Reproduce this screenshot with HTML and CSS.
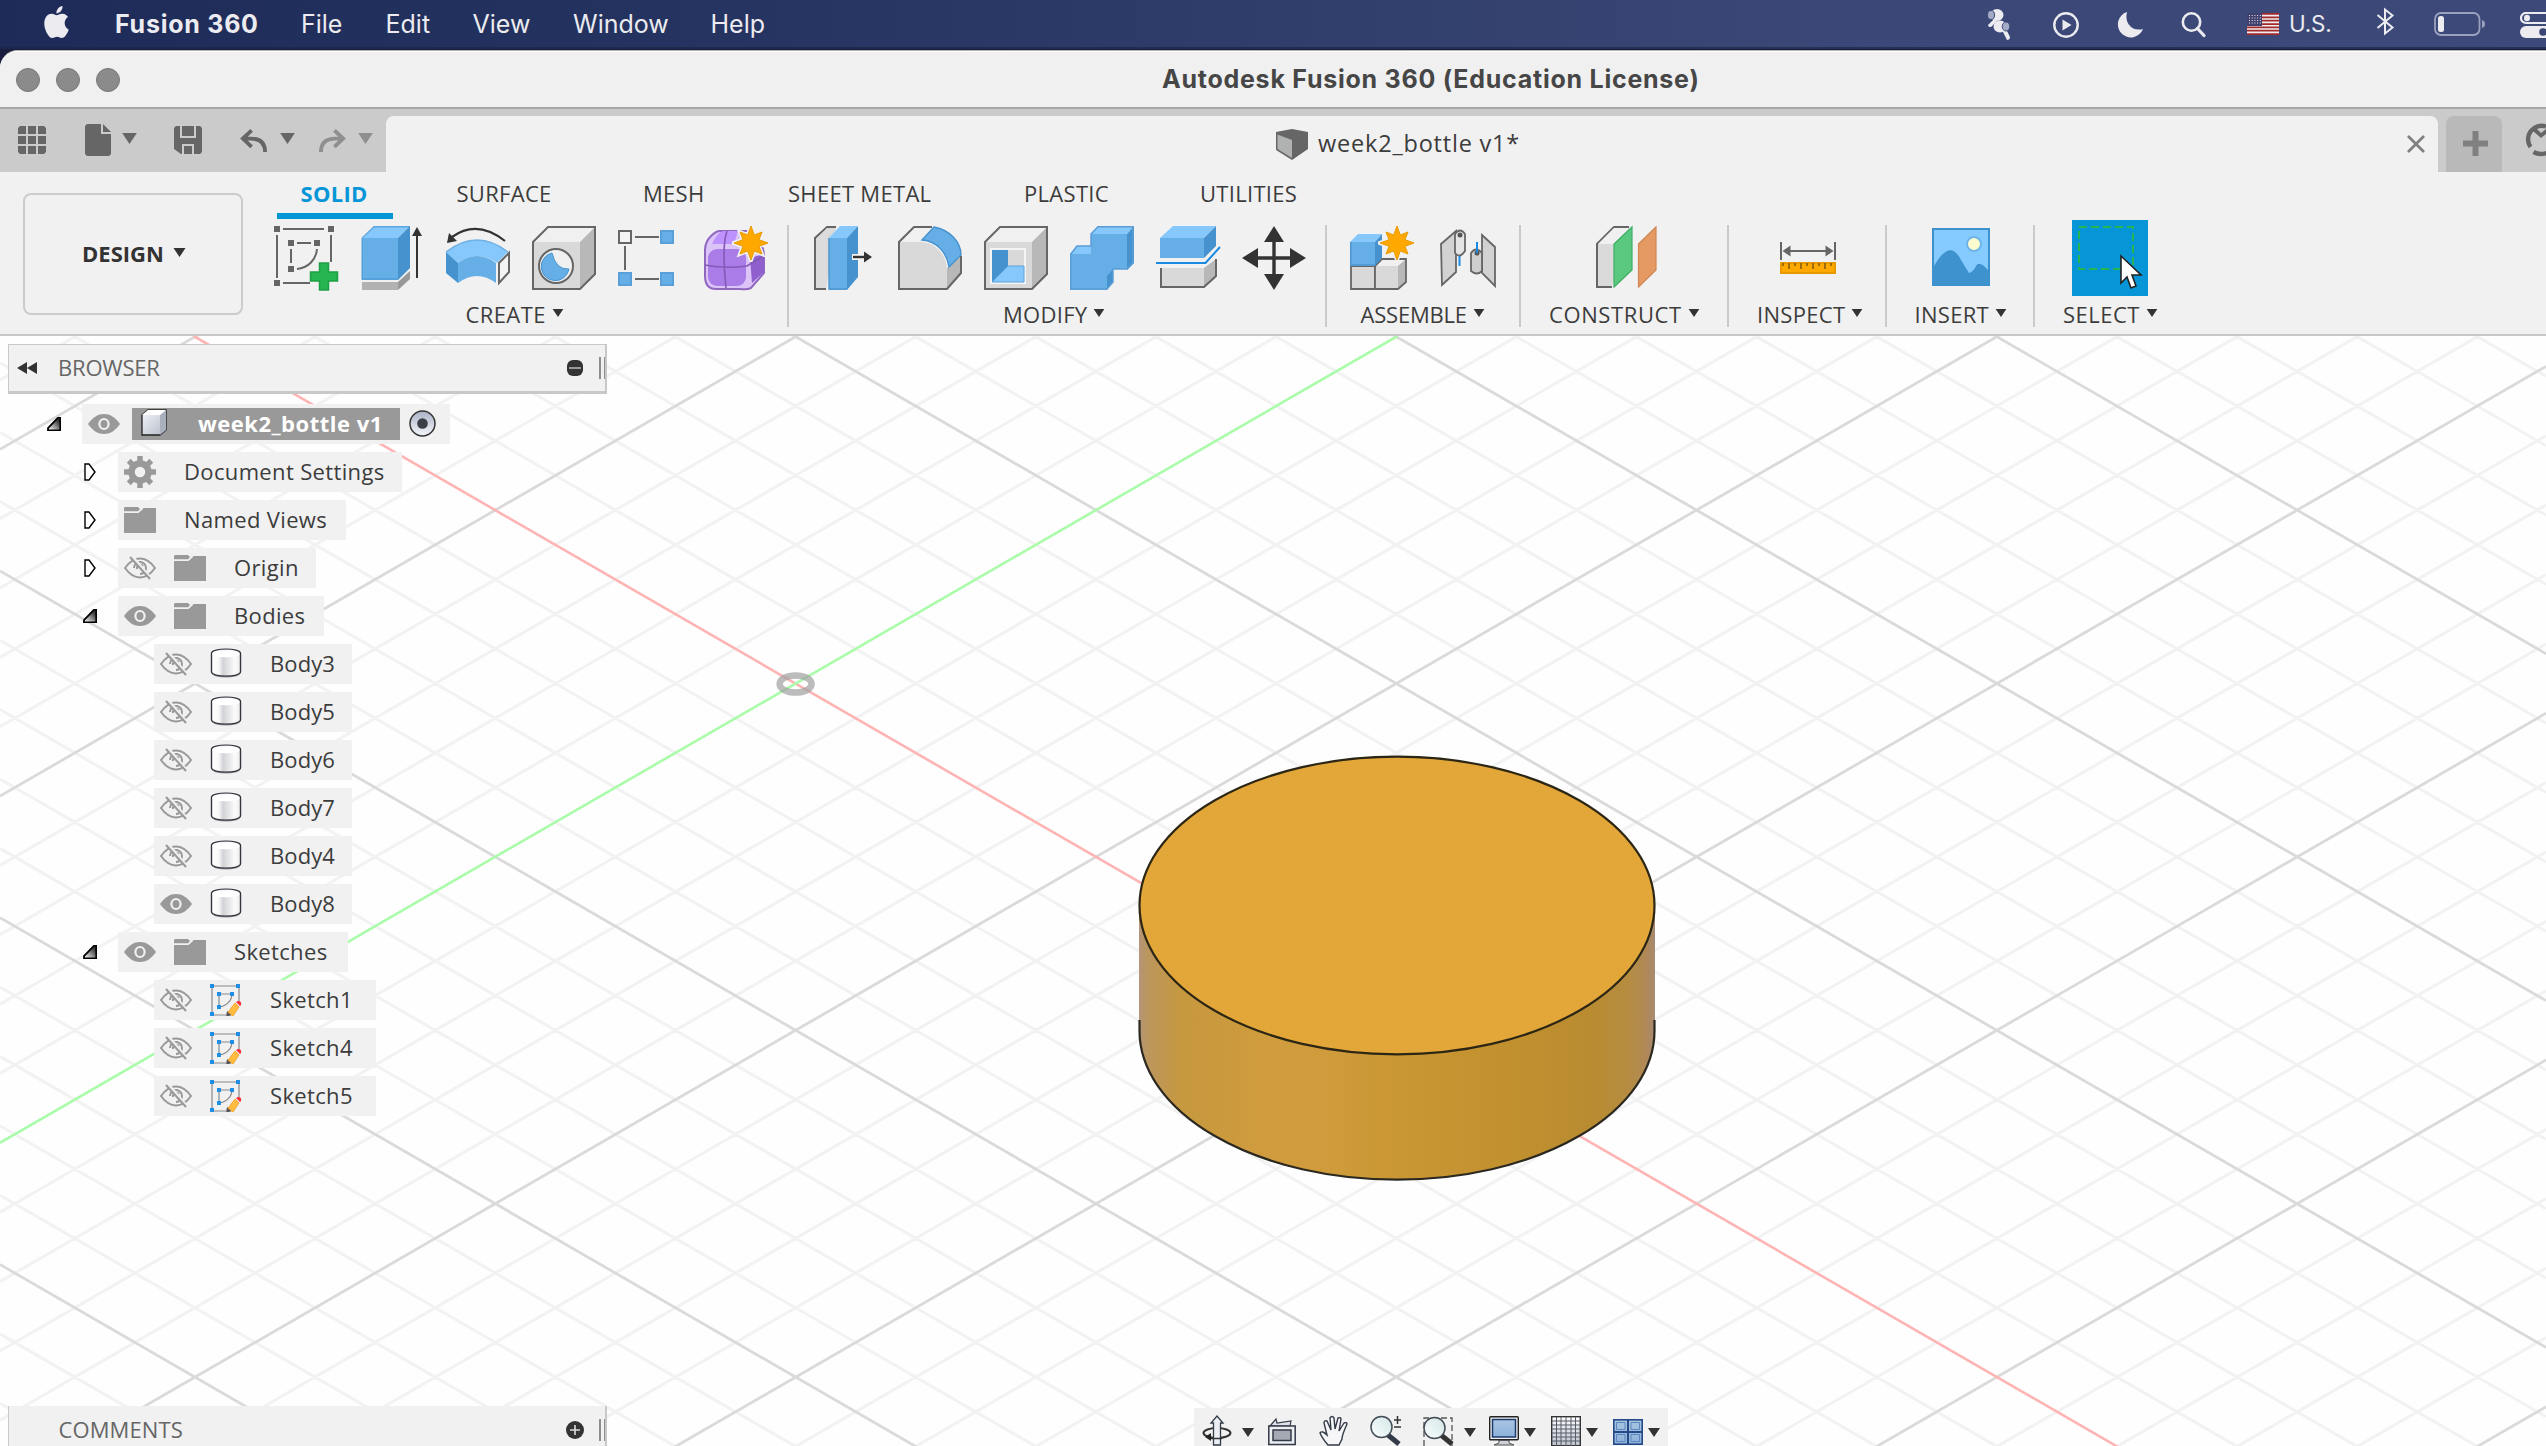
FILE: index.html
```html
<!DOCTYPE html>
<html lang="en">
<head>
<meta charset="utf-8">
<title>Autodesk Fusion 360</title>
<link rel="stylesheet" href="styles.css">
</head>
<body>
<svg class="defs" aria-hidden="true">
  <defs>
    <linearGradient id="side" x1="0" x2="1" y1="0" y2="0">
      <stop offset="0" stop-color="#b3957a"/><stop offset=".015" stop-color="#bb965f"/><stop offset=".08" stop-color="#c6983f"/><stop offset=".25" stop-color="#d09c3d"/><stop offset=".38" stop-color="#cf9b3b"/><stop offset=".5" stop-color="#c99733"/><stop offset=".72" stop-color="#c2912f"/><stop offset=".88" stop-color="#b98b31"/><stop offset=".95" stop-color="#b58c41"/><stop offset=".985" stop-color="#af885a"/><stop offset="1" stop-color="#a68a72"/>
    </linearGradient>
    <linearGradient id="metal" x1="0" x2="1" y1="0" y2="1"><stop offset="0" stop-color="#f4f6fa"/><stop offset="1" stop-color="#b4bac6"/></linearGradient>
    <linearGradient id="can" x1="0" x2="1" y1="0" y2="0"><stop offset="0" stop-color="#fff"/><stop offset=".25" stop-color="#f8f8f8"/><stop offset=".4" stop-color="#d2d3d8"/><stop offset=".8" stop-color="#fafafa"/><stop offset="1" stop-color="#eee"/></linearGradient>
    <linearGradient id="fold" x1="0" x2="1" y1="1" y2="0"><stop offset=".1" stop-color="#eee"/><stop offset=".8" stop-color="#333"/></linearGradient>
    <linearGradient id="ring" x1="0" x2="0" y1="0" y2="1"><stop offset="0" stop-color="#a9b2c6"/><stop offset="1" stop-color="#f4f6fa"/></linearGradient>
    <linearGradient id="lens" x1="0" x2="1" y1="1" y2="0"><stop offset="0" stop-color="#fafefe"/><stop offset="1" stop-color="#d3e6e6"/></linearGradient>
    <linearGradient id="glass" x1="0" x2="0" y1="0" y2="1"><stop offset="0" stop-color="#a9c4e2"/><stop offset="1" stop-color="#8db1db"/></linearGradient>
    <linearGradient id="mesh" x1="0" x2="0" y1="0" y2="1"><stop offset="0" stop-color="#fff"/><stop offset="1" stop-color="#bcc1cc"/></linearGradient>
  </defs>
  <symbol id="caret" viewBox="0 0 12 9"><path d="M0 0h12L6 9z" fill="currentColor"/></symbol>
  <symbol id="star" viewBox="-19 -19 38 38"><path d="M0-17 3.3-8 11-11 8-3.3 17 0 8 3.3 11 11 3.3 8 0 17-3.3 8-11 11-8 3.3-17 0-8-3.3-11-11-3.3-8z" fill="#ffa800" stroke="#f1f1f1" stroke-width="4"/><path d="M0-17 3.3-8 11-11 8-3.3 17 0 8 3.3 11 11 3.3 8 0 17-3.3 8-11 11-8 3.3-17 0-8-3.3-11-11-3.3-8z" fill="#ffa800" stroke="#e89a00"/></symbol>
  <symbol id="eye" viewBox="0 0 32 24"><path d="M0 12C5 5 10 2 16 2s11 3 16 10c-5 7-10 10-16 10S5 19 0 12z" fill="#999"/><ellipse cx="16" cy="12" rx="4.600" ry="5" fill="none" stroke="#f1f1f1" stroke-width="2.200"/></symbol>
  <symbol id="eye-off" viewBox="0 0 32 24"><g fill="none" stroke="#999" stroke-width="2"><path d="M1 12C6 5 10 2.500 16 2.500s10 2.500 15 9.500c-5 7-9 9.500-15 9.500S6 19 1 12z"/><path d="M10 12a6 6 0 0 1 6-6 6 6 0 0 1 6 6 6 6 0 0 1-6 6M13 13a3.500 3.500 0 0 1 6-3"/><path d="M8 0l20 24" stroke="#f1f1f1" stroke-width="3"/><path d="M6 1l20 22"/></g></symbol>
  <symbol id="folder" viewBox="0 0 32 26" preserveAspectRatio="none"><path d="M0 6h14l5-5h13v25H0z" fill="#999"/><path d="M1 0h13l2 2-2 2.500H0V1z" fill="#999"/><path d="M0 5.200h14.500l4.500-4" stroke="#f1f1f1" stroke-width="1.200" fill="none"/></symbol>
  <symbol id="body" viewBox="0 0 32 34" preserveAspectRatio="none"><ellipse cx="16" cy="29" rx="14" ry="4.500" fill="#9a9aa0"/><path d="M1.500 6c0-6.500 29-6.500 29 0v21c0 6.500-29 6.500-29 0z" fill="url(#can)" stroke="#33343c" stroke-width="1.400"/><ellipse cx="16" cy="6.500" rx="13.500" ry="4" fill="#fff"/></symbol>
  <symbol id="sketch" viewBox="0 0 32 32"><path d="M2 2h27v18M2 2v29h14M9 10h13c0 6-5 12-13 13V10" fill="none" stroke="#888" stroke-width="1.200"/><path d="M0 0h4v4H0zM26 0h4v4h-4zM0 28h4v4H0zM7 8h4v4H7zM20 8h4v4h-4zM7 21h4v4H7z" fill="#1f8fe6"/><path d="M16 33l1-6 5 4z" fill="#555"/><path d="M18 28l7-9 4 4-6 9z" fill="#ffbc41" stroke="#f1a01c" stroke-width=".8"/><path d="M26 18l2-1q4 0 3 4l-1 1z" fill="#fb2f35"/></symbol>
  <symbol id="open" viewBox="0 0 14 14"><path d="M1 13.300V11L11 .7h2.300v12.600z" fill="url(#fold)" stroke="#000" stroke-width="1.800"/></symbol>
  <symbol id="closed" viewBox="0 0 12 18"><path d="M1 1h4l6 8-6 8H1z" fill="#fff" stroke="#000" stroke-width="1.400"/></symbol>
</svg>

<nav class="menubar">
  <svg class="apple" viewBox="2 0 20 24" preserveAspectRatio="none"><path d="M12.152 6.896c-.948 0-2.415-1.078-3.960-1.040-2.040.027-3.910 1.183-4.961 3.014-2.117 3.675-.546 9.103 1.519 12.090 1.013 1.454 2.208 3.090 3.792 3.039 1.520-.065 2.090-.987 3.935-.987 1.831 0 2.350.987 3.960.948 1.637-.026 2.676-1.480 3.676-2.948 1.156-1.688 1.636-3.325 1.662-3.415-.039-.013-3.182-1.221-3.220-4.857-.026-3.040 2.480-4.494 2.597-4.559-1.429-2.090-3.623-2.324-4.390-2.376-2-.156-3.675 1.090-4.610 1.090zM15.530 3.830c.843-1.012 1.400-2.427 1.245-3.830-1.207.052-2.662.805-3.532 1.818-.78.896-1.454 2.338-1.273 3.714 1.338.104 2.715-.688 3.559-1.701" fill="#ebebf0"/></svg>
  <div class="menus"><b>Fusion 360</b><span>File</span><span>Edit</span><span>View</span><span>Window</span><span>Help</span></div>
  <div class="status">
    <svg class="s-pods" viewBox="0 0 24 31"><g fill="#ebebf0"><ellipse cx="10" cy="6" rx="6.500" ry="6"/><ellipse cx="13" cy="17.500" rx="6.500" ry="6"/><path d="M7 10l3 2-6 6q-3 0-3-2zM15 21l4-1 4 8q0 3-3 3z"/></g><ellipse cx="4" cy="6" rx="3.500" ry="4.500" fill="#a4abc6" stroke="#3b4877"/><ellipse cx="19" cy="17.500" rx="3.800" ry="4.500" fill="#a4abc6" stroke="#3b4877"/></svg>
    <svg class="s-play" viewBox="0 0 26 26"><circle cx="13" cy="13" r="11.700" fill="none" stroke="#ebebf0" stroke-width="2.400"/><path d="M9.500 7.500v11l9-5.500z" fill="#ebebf0"/></svg>
    <svg class="s-moon" viewBox="0 0 26 26"><path d="M10 0a13 13 0 1 0 16 17C15 20 7 11 10 0z" fill="#ebebf0"/></svg>
    <svg class="s-find" viewBox="0 0 25 25"><circle cx="10.500" cy="10" r="8.700" fill="none" stroke="#ebebf0" stroke-width="2.600"/><path d="M16.500 16.500l6.500 7" stroke="#ebebf0" stroke-width="3.200" stroke-linecap="round"/></svg>
    <svg class="s-flag" viewBox="0 0 32 22"><path fill="#f0eef0" d="M0 0h32v22H0z"/><path d="M0 .9h32M0 4.300h32M0 7.700h32M0 11.100h32M0 14.400h32M0 17.700h32M0 21.200h32" stroke="#a3292b" stroke-width="1.700"/><path fill="#40406e" d="M0 0h15v13H0z"/><path d="M2 2.500h12M2 5h12M2 7.500h12M2 10h12" stroke="#e8e8f0" stroke-width="1" stroke-dasharray="1 1.700"/></svg>
    <span class="s-lang">U.S.</span>
    <svg class="s-bt" viewBox="0 0 18 27"><path d="M1.500 7l15 12.500L9 25.500V1.500L16.500 7.500 1.500 20" fill="none" stroke="#ebebf0" stroke-width="2"/></svg>
    <svg class="s-batt" viewBox="0 0 51 24"><rect x="1" y="1" width="44.500" height="22" rx="6" fill="none" stroke="#9aa1bd" stroke-width="1.800"/><rect x="4" y="4" width="6" height="16" rx="2.500" fill="#ebebf0"/><path d="M48 8q3 1 3 4t-3 4z" fill="#9aa1bd"/></svg>
    <svg class="s-cc" viewBox="0 0 26 26"><rect x="1" y="1" width="34" height="10" rx="5" fill="none" stroke="#ebebf0" stroke-width="2.200"/><ellipse cx="7" cy="6" rx="3" ry="3.200" fill="#ebebf0"/><rect y="14" width="36" height="12" rx="6" fill="#ebebf0"/><circle cx="23" cy="20" r="3.800" fill="#3b4877"/></svg>
  </div>
</nav>

<div class="window">
  <header class="titlebar"><div class="lights"><i></i><i></i><i></i></div><h1>Autodesk Fusion 360 (Education License)</h1></header>

  <div class="tabbar">
    <div class="quick">
      <svg class="q-grid" viewBox="0 0 28 28"><path fill="#666" d="M2 0h6v8H0V2zM10 0h8v8h-8zM20 0h6l2 2v6h-8zM0 10h8v8H0zM10 10h8v8h-8zM20 10h8v8h-8zM0 20h8v8H2l-2-2zM10 20h8v8h-8zM20 20h8v6l-2 2h-6z"/></svg>
      <svg class="q-file" viewBox="0 0 26 32"><path fill="#666" d="M2 0h14v10h10v20l-2 2H2l-2-2V2zM18 0l8 8h-8z"/></svg>
      <svg class="q-c1"><use href="#caret"/></svg>
      <svg class="q-save" viewBox="0 0 28 28"><path fill="#666" d="M2 0h24l2 2v24l-2 2H7l-7-5V2z"/><path fill="#cbcbcb" d="M6 0h2v10h12V0h2v12H6zM8 28v-10h12v10h-2v-8h-8v8z"/></svg>
      <svg class="q-undo" viewBox="0 0 27 24"><path d="M11 1L2 9.500 11 18M2.500 9.500H10q15 0 15 14" fill="none" stroke="#666" stroke-width="4"/></svg>
      <svg class="q-c2"><use href="#caret"/></svg>
      <svg class="q-redo" viewBox="0 0 27 24"><path d="M16 1l9 8.500L16 18M24.500 9.500H17q-15 0-15 14" fill="none" stroke="#8f8f8f" stroke-width="4"/></svg>
      <svg class="q-c3"><use href="#caret"/></svg>
    </div>
    <div class="doc-tab">
      <svg class="cube" viewBox="0 0 32 31"><path fill="#666" d="M0 3L16 0l16 3v17L16 31 0 21z"/><path fill="#b0b2b2" d="M1.500 5.500L16 11v18L1.500 20z"/></svg>
      <span>week2_bottle v1*</span>
      <svg class="close" viewBox="0 0 18 18"><path d="M1 1l16 16M17 1L1 17" stroke="#808080" stroke-width="2.800"/></svg>
    </div>
    <div class="new-tab"><svg viewBox="0 0 25 25"><path d="M12.500 0v25M0 12.500h25" stroke="#808080" stroke-width="6"/></svg></div>
    <svg class="job" viewBox="0 0 20 32"><path d="M4.500 23A13.500 13.500 0 0 1 20 2.500M7.500 28q6 3.500 13 1" fill="none" stroke="#666" stroke-width="4.500"/><path d="M7 7l8 7 5-4V5l-5 4-5-5z" fill="#666"/></svg>
  </div>

  <section class="ribbon">
    <button class="workspace">DESIGN<svg><use href="#caret"/></svg></button>
    <div class="tools">
      <div class="tabs"><span class="on">SOLID</span><span>SURFACE</span><span>MESH</span><span>SHEET METAL</span><span>PLASTIC</span><span>UTILITIES</span></div>
      <div class="groups">
        <div class="group create">
          <div class="icons">
            <svg viewBox="0 0 64 64"><path d="M9 3H50M3 9v43M57 9v27M9 57h27M23 17h14M17 23v14M43 23c-1 11-9 19-20 20" fill="none" stroke="#666" stroke-width="2"/><path d="M0 0h6v6H0zM54 0h6v6h-6zM0 54h6v6H0zM14 14h6v6h-6zM40 14h6v6h-6zM14 40h6v6h-6z" fill="#666"/><path d="M45.500 37h9v9h9v9h-9v9h-9v-9h-9v-9h9z" fill="#27b552" stroke="#1fa047" stroke-width="1.500"/></svg>
            <svg viewBox="0 0 64 64"><path fill="#66aee6" d="M2 12h36v42H2z"/><path fill="#86c8fb" d="M2 12L14 0h36L38 12z"/><path fill="#4592ce" d="M38 12L50 0v42L38 54z"/><path d="M2 12v41h36M2 12L14 .8h36" fill="none" stroke="#4592ce" stroke-opacity=".6" stroke-width="1.500"/><path fill="#b2b2b2" d="M2 56h36v8H2z"/><path fill="#999" d="M38 56l12-11v8L38 64z"/><path d="M57 8v44" stroke="#333" stroke-width="2"/><path d="M57 1l5 9H52z" fill="#333"/></svg>
            <svg viewBox="0 0 64 64"><path d="M59 15Q31-7 6 11" fill="none" stroke="#333" stroke-width="2.200"/><path d="M1 17L3 7l8 8z" fill="#333"/><path d="M0 26Q31 2 62 26L51 37Q31 23 12 37z" fill="#86c8fb"/><path d="M12 37Q31 23 50 37V57Q31 43 12 57z" fill="#66aee6"/><path d="M0 26l12 11v20L0 47z" fill="#4592ce"/><path d="M0 26Q31 2 62 26" fill="none" stroke="#6fb0e4" stroke-width="1.500"/><path d="M53 37l10-10v19L53 57z" fill="#f4f4f4" stroke="#666" stroke-width="2"/></svg>
            <svg viewBox="0 0 64 64"><path fill="#d9d9d9" d="M1 16h47v47H1z"/><path fill="#f0f0f0" d="M1 16L16 1h47L48 16z"/><path fill="#b8b8b8" d="M48 16L63 1v47L48 63z"/><path d="M1 16L16 1h47v47L48 63H1z" fill="none" stroke="#666" stroke-width="2"/><circle cx="24" cy="40" r="17" fill="#f1f1f1" stroke="#666" stroke-width="2"/><path d="M20 27a14 14 0 1 0 17 16Q24 44 20 27z" fill="#66aee6" stroke="#4592ce"/></svg>
            <svg viewBox="0 0 64 64"><path d="M17 11h24M7 20v24M17 53h24" stroke="#666" stroke-width="2"/><path d="M1 5h12v12H1z" fill="#f4f4f4" stroke="#666" stroke-width="2"/><path d="M43 5h12v12H43zM1 47h12v12H1zM43 47h12v12H43z" fill="#66aee6" stroke="#5a9fd8" stroke-width="2"/></svg>
            <svg class="wide" viewBox="0 0 66 64"><path d="M1 24C1 12 12 5 16 5h30q14 12 14 24v18L47 62Q43 64 36 63H12Q1 63 1 50z" fill="#dcc4f9" stroke="#8f67bf" stroke-width="2"/><path d="M10 14Q15 5 20 5h14L30 18H8z" fill="#bd92ff"/><rect x="4" y="23" width="38" height="37" rx="9" fill="#a97ce8"/><path d="M46 32l14-4v18L48 57z" fill="#8f5fce"/><path d="M1 39q20 4 42 1l16-10M23 5Q20 14 20 28t2 34" fill="none" stroke="#8459b5" stroke-width="1.600"/><use href="#star" x="28" y="-2" width="38" height="38"/></svg>
          </div>
          <div class="label">CREATE<svg><use href="#caret"/></svg></div>
        </div>
        <div class="group modify">
          <div class="icons">
            <svg viewBox="0 0 64 64"><path d="M14 63H3V12L15 1h9" fill="#d9d9d9" stroke="#666" stroke-width="2"/><path d="M4 13L15 2h8L14 12v50H4z" fill="#dcdcdc"/><path fill="#66aee6" d="M17 12h18v52H17z"/><path fill="#86c8fb" d="M17 12L28 0h18L35 12z"/><path fill="#4592ce" d="M35 12L46 0v51L35 64z"/><path d="M17 12v51h18" fill="none" stroke="#4f96cf" stroke-width="1.500"/><path d="M40 31h13" stroke="#f1f1f1" stroke-width="6"/><path d="M41 31h14" stroke="#333" stroke-width="2.400"/><path d="M52 25.500l8 5.500-8 5.500z" fill="#333"/></svg>
            <svg viewBox="0 0 64 64"><path fill="#d9d9d9" d="M1 16h23c13 1 24 12 25 27v20H1z"/><path fill="#f0f0f0" d="M1 16L16 1h19L24 15z"/><path fill="#b8b8b8" d="M49 42l14-12v17L49 63z"/><path d="M34 1H16L1 16v47h48l14-16V30" fill="none" stroke="#666" stroke-width="2"/><path d="M24 14L36 1c16 3 27 15 27 28L51 41C49 27 39 15 24 14z" fill="#66aee6" stroke="#4592ce" stroke-width="1.400"/></svg>
            <svg viewBox="0 0 64 64"><path fill="#d9d9d9" d="M1 16h47v47H1z"/><path fill="#f0f0f0" d="M1 16L16 1h47L48 16z"/><path fill="#b8b8b8" d="M48 16L63 1v47L48 63z"/><path d="M1 16L16 1h47v47L48 63H1z" fill="none" stroke="#666" stroke-width="2"/><path fill="#f4f4f4" d="M6 22h36v36H6z"/><path fill="#d9d9d9" d="M24 24h16v17H24z"/><path fill="#4592ce" d="M8 24h16v17L8 56z"/><path fill="#86c8fb" d="M8 56l16-16h16v16z" stroke="#5aa3de"/></svg>
            <svg viewBox="0 0 64 64"><path fill="#66aee6" d="M21 8h36v35H43L37 64H0V28h21z"/><path fill="#86c8fb" d="M21 8l7-8h36l-7 8zM0 28l7-8h14v8z"/><path fill="#4592ce" d="M57 8l7-8v37l-7 7zM37 64V50l6-7v13z"/><path d="M.8 28v35H37l6-7V43h14l6-6V.8H28L21 8v12H7z" fill="none" stroke="#5a9dd6" stroke-width="1.500"/></svg>
            <svg viewBox="0 0 64 64"><path fill="#66aee6" d="M4 12h44v20H4z"/><path fill="#86c8fb" d="M4 12L17 0h43L48 12z"/><path fill="#4592ce" d="M48 12L60 0v20L48 32z"/><path d="M0 37h49.500L64 21" fill="none" stroke="#1a8ae2" stroke-width="2"/><path fill="#d9d9d9" d="M4 42h44v20H4z"/><path fill="#b8b8b8" d="M48 42l12-9v18L48 62z"/><path d="M5 42v19h43l12-11V33" fill="none" stroke="#666" stroke-width="2"/></svg>
            <svg viewBox="0 0 64 64"><path d="M32 12v40M12 32h40" stroke="#333" stroke-width="3.400"/><path d="M32 0l10 16H22zM32 64l10-16H22zM0 32l16-10v20zM64 32L48 22v20z" fill="#333"/></svg>
          </div>
          <div class="label">MODIFY<svg><use href="#caret"/></svg></div>
        </div>
        <div class="group assemble">
          <div class="icons">
            <svg viewBox="0 0 64 64"><path d="M1 40h24v23H1z" fill="#d9d9d9" stroke="#666" stroke-width="1.800"/><path fill="#d9d9d9" d="M25 40h23v23H25z"/><path fill="#f0f0f0" d="M25 40l7-7h24l-8 7z"/><path fill="#b8b8b8" d="M48 40l8-7v23l-8 7z"/><path d="M25 40l7-7h24v23l-8 7H25z" fill="none" stroke="#666" stroke-width="1.800"/><path fill="#66aee6" d="M0 16h25v24H0z"/><path fill="#86c8fb" d="M0 16l8-8h24l-7 8z"/><path fill="#4592ce" d="M25 16l7-8v24l-7 8z"/><path d="M.8 16v23H25" fill="none" stroke="#4f96cf" stroke-width="1.500"/><use href="#star" x="28" y="-2" width="38" height="38"/></svg>
            <svg viewBox="0 0 64 64"><path d="M5 18L20 5v41L6 59z" fill="#d2d2d2" stroke="#666" stroke-width="1.800"/><path d="M19 8q5-7 10 0v17q-5 8-10 2z" fill="#e4e4e4" stroke="#666" stroke-width="1.800"/><circle cx="24" cy="9" r="2.500" fill="#555"/><path d="M23.500 30v10" stroke="#1a8ae2" stroke-width="2"/><path d="M46 9l13 12v39L46 47z" fill="#d2d2d2" stroke="#666" stroke-width="1.800"/><path d="M35 27q5-7 11 0v18q-5 5-11 0z" fill="#cfcfcf" stroke="#666" stroke-width="1.800"/><circle cx="41" cy="27" r="2.500" fill="#555"/><path d="M41 16v11" stroke="#1a8ae2" stroke-width="2"/></svg>
          </div>
          <div class="label">ASSEMBLE<svg><use href="#caret"/></svg></div>
        </div>
        <div class="group construct">
          <div class="icons"><svg viewBox="0 0 64 64"><path d="M18 61H3V18L20 1h15" fill="#dadada" stroke="#666" stroke-width="2"/><path d="M4 18L20 2h16L20 18z" fill="#f0f0f0"/><path d="M20 18L38 1v43L20 61z" fill="#5bc880" stroke="#3fae66" stroke-width="1.200"/><path d="M44.500 18L62 1v43L44.500 61z" fill="#e59a63" stroke="#d08754" stroke-width="1.200"/></svg></div>
          <div class="label">CONSTRUCT<svg><use href="#caret"/></svg></div>
        </div>
        <div class="group inspect">
          <div class="icons"><svg viewBox="0 0 64 64"><path d="M3 16v18M57 16v18M9 25h42" stroke="#666" stroke-width="2"/><path d="M4.500 25l8-5.500v11zM55.500 25l-8-5.500v11z" fill="#666"/><path d="M3 37h54v10H3z" fill="#ffa800" stroke="#e89a00" stroke-width="2"/><path d="M5 37v3M11 37v6M17 37v3M23 37v6M29 37v3M35 37v6M41 37v3M47 37v6M53 37v3" stroke="#805a10" stroke-width="1.500"/></svg></div>
          <div class="label">INSPECT<svg><use href="#caret"/></svg></div>
        </div>
        <div class="group insert">
          <div class="icons"><svg viewBox="0 0 64 64"><path d="M3 3h56v56H3z" fill="#85cbff" stroke="#3d92cd" stroke-width="2"/><circle cx="44" cy="18" r="7" fill="#fcfbcf" stroke="#6db5e8" stroke-width="2"/><path d="M4 40Q20 12 31 34l8 13q4-1 7-7t12 4v15H4z" fill="#3e93cf"/></svg></div>
          <div class="label">INSERT<svg><use href="#caret"/></svg></div>
        </div>
        <div class="group select">
          <div class="icons"><svg class="big" viewBox="0 0 76 76"><path fill="#0696d7" d="M0 0h76v76H0z"/><path d="M7 7h54v42H7z" fill="none" stroke="#27b552" stroke-width="2" stroke-dasharray="8 4"/><path d="M49 36v27l6-6 4 11 5-2-4-11h9z" fill="#fff" stroke="#222" stroke-width="1.600"/></svg></div>
          <div class="label">SELECT<svg><use href="#caret"/></svg></div>
        </div>
      </div>
    </div>
  </section>

  <main class="viewport">
    <svg class="scene" viewBox="0 336 2546 1110">
      <path id="minor" stroke="#f2f2f2" stroke-width="3"/>
      <path id="major" stroke="#dadada" stroke-width="2.800"/>
      <path d="M193.600 336L2546 1694.100" stroke="#ffb4b4" stroke-width="2.600"/>
      <path d="M0 1142.800L1397.500 336" stroke="#aafcaa" stroke-width="2.600"/>
      <ellipse cx="795.600" cy="684" rx="16" ry="8.500" fill="none" stroke="#a0a0a0" stroke-opacity=".7" stroke-width="6.500"/>
      <path d="M1139 905.500V1030.700A258 149 0 0 0 1655 1030.700V905.500z" fill="url(#side)"/>
      <path d="M1139.500 1020v10.700A257.500 149 0 0 0 1654.500 1030.700V1020" fill="none" stroke="#2b2820" stroke-width="2.200"/>
      <ellipse cx="1397" cy="905.500" rx="257.500" ry="148.800" fill="#e2a639" stroke="#2c2614" stroke-width="2.200"/>
    </svg>

    <aside class="browser">
      <svg class="collapse" viewBox="0 0 20 12"><path d="M0 6l10-6v12zM10 6l10-6v12z" fill="#333"/></svg>
      <span>BROWSER</span>
      <svg class="dot" viewBox="0 0 16 16"><rect width="16" height="16" rx="6" fill="#333"/><path d="M2 8h12" stroke="#999" stroke-width="2"/></svg>
      <i class="grip"></i>
    </aside>

    <ul class="tree">
      <li class="root"><svg class="tw o"><use href="#open"/></svg><div class="node"><svg class="eye"><use href="#eye"/></svg><div class="hl"><svg class="comp" viewBox="0 0 26 27"><path d="M1 6l6-5h18v20l-6 5H1z" fill="url(#metal)" stroke="#222" stroke-width="1.300"/><path d="M19 6l6-5v20l-6 5z" fill="#a8afbd"/><path d="M1 6l6-5h18l-6 5z" fill="#fff"/></svg><b>week2_bottle v1</b></div><svg class="radio" viewBox="0 0 27 27"><circle cx="13.500" cy="13.500" r="12.500" fill="url(#ring)" stroke="#333" stroke-width="1.500"/><circle cx="13.500" cy="13.500" r="5.300" fill="#3c3e46"/></svg></div></li>
      <li class="l1"><svg class="tw"><use href="#closed"/></svg><div class="node w-doc"><svg class="ic" viewBox="0 0 32 32"><circle cx="16" cy="16" r="8.500" fill="none" stroke="#999" stroke-width="6.500"/><path d="M16 0v7M16 25v7M0 16h7M25 16h7M4.700 4.700l5 5M22.300 22.300l5 5M27.300 4.700l-5 5M9.700 22.300l-5 5" stroke="#999" stroke-width="5.500"/></svg><span>Document Settings</span></div></li>
      <li class="l1"><svg class="tw"><use href="#closed"/></svg><div class="node w-views"><svg class="folder"><use href="#folder"/></svg><span>Named Views</span></div></li>
      <li class="l1"><svg class="tw"><use href="#closed"/></svg><div class="node w-origin"><svg class="eye"><use href="#eye-off"/></svg><svg class="folder"><use href="#folder"/></svg><span>Origin</span></div></li>
      <li class="l1"><svg class="tw o"><use href="#open"/></svg><div class="node w-bodies"><svg class="eye"><use href="#eye"/></svg><svg class="folder"><use href="#folder"/></svg><span>Bodies</span></div></li>
      <li class="l2"><div class="node body"><svg class="eye"><use href="#eye-off"/></svg><svg class="can"><use href="#body"/></svg><span>Body3</span></div></li>
      <li class="l2"><div class="node body"><svg class="eye"><use href="#eye-off"/></svg><svg class="can"><use href="#body"/></svg><span>Body5</span></div></li>
      <li class="l2"><div class="node body"><svg class="eye"><use href="#eye-off"/></svg><svg class="can"><use href="#body"/></svg><span>Body6</span></div></li>
      <li class="l2"><div class="node body"><svg class="eye"><use href="#eye-off"/></svg><svg class="can"><use href="#body"/></svg><span>Body7</span></div></li>
      <li class="l2"><div class="node body"><svg class="eye"><use href="#eye-off"/></svg><svg class="can"><use href="#body"/></svg><span>Body4</span></div></li>
      <li class="l2"><div class="node body"><svg class="eye"><use href="#eye"/></svg><svg class="can"><use href="#body"/></svg><span>Body8</span></div></li>
      <li class="l1"><svg class="tw o"><use href="#open"/></svg><div class="node w-sketches"><svg class="eye"><use href="#eye"/></svg><svg class="folder"><use href="#folder"/></svg><span>Sketches</span></div></li>
      <li class="l2"><div class="node sk"><svg class="eye"><use href="#eye-off"/></svg><svg class="skic"><use href="#sketch"/></svg><span>Sketch1</span></div></li>
      <li class="l2"><div class="node sk"><svg class="eye"><use href="#eye-off"/></svg><svg class="skic"><use href="#sketch"/></svg><span>Sketch4</span></div></li>
      <li class="l2"><div class="node sk"><svg class="eye"><use href="#eye-off"/></svg><svg class="skic"><use href="#sketch"/></svg><span>Sketch5</span></div></li>
    </ul>

    <aside class="comments">
      <span>COMMENTS</span>
      <svg class="dot" viewBox="0 0 18 18"><circle cx="9" cy="9" r="9" fill="#333"/><path d="M4 9h10M9 4v10" stroke="#ddd" stroke-width="1.600"/></svg>
      <i class="grip"></i>
    </aside>

    <div class="navbar">
      <svg class="n-orbit" viewBox="0 0 30 30"><ellipse cx="15" cy="17" rx="13.500" ry="5" fill="none" stroke="#333" stroke-width="2"/><path d="M11.500 29V7H9l6-7 6 7h-2.500v22z" fill="#eceef4" stroke="#333a48" stroke-width="1.300"/><path d="M9 22.500h11" stroke="#333" stroke-width="1.500"/><path d="M3 21l6-4v8z" fill="#222"/></svg>
      <svg class="n-tri t1"><use href="#caret"/></svg>
      <svg class="n-look" viewBox="0 0 28 28"><path d="M2 9l6-7 1 4 14-2-1 5z" fill="#dfe1e6" stroke="#333a48" stroke-width="1.200"/><rect x=".8" y="9" width="26.400" height="18.500" fill="#eceef2" stroke="#333a48" stroke-width="1.500"/><rect x="5" y="13" width="18" height="10.500" fill="#a4a9b4" stroke="#333a48" stroke-width="1.500"/></svg>
      <svg class="n-hand" viewBox="0 0 30 30"><path d="M9 29Q3 22 1 17q2-3 7 2L5 7q0-3 3-2l4 9-1-12q2-3 4 0l1 11 3-11q3-1 3 1l-2 12 5-8q3-1 3 1-5 11-5 15l-3 6z" fill="#f6f6f8" stroke="#333a48" stroke-width="1.400"/></svg>
      <svg class="n-zoom" viewBox="0 0 31 30"><path d="M18 19l11 9" stroke="#333a48" stroke-width="5"/><circle cx="11.500" cy="11" r="10.500" fill="url(#lens)" stroke="#444c55" stroke-width="1.500"/><path d="M24 4h7M27.500 0v8M24 11h7" stroke="#333" stroke-width="1.500"/></svg>
      <svg class="n-fit" viewBox="0 0 31 30"><path d="M1 30V2h28v28" fill="none" stroke="#555" stroke-width="1.300" stroke-dasharray="6 3"/><path d="M18 19l11 9" stroke="#333" stroke-width="5"/><circle cx="11.500" cy="12" r="10.500" fill="url(#lens)" stroke="#444c55" stroke-width="1.500"/></svg>
      <svg class="n-tri t2"><use href="#caret"/></svg>
      <svg class="n-disp" viewBox="0 0 30 30"><path d="M10 24h10v3l5 2H5l5-2z" fill="#cdd1da" stroke="#555" stroke-width="1"/><rect x=".7" y=".7" width="28.600" height="23" rx="1" fill="#f1f2f6" stroke="#222" stroke-width="1.400"/><rect x="3.500" y="3.500" width="23" height="17.500" fill="url(#glass)" stroke="#1c3a6a" stroke-width="1.500"/></svg>
      <svg class="n-tri t3"><use href="#caret"/></svg>
      <svg class="n-grid" viewBox="0 0 30 30"><rect x=".7" y=".7" width="28.600" height="29" fill="url(#mesh)" stroke="#333" stroke-width="1.400"/><path d="M5.500 1v29M10 1v29M15 1v29M20 1v29M24.500 1v29M1 5h28M1 9h28M1 13h28M1 17h28M1 21h28M1 25h28" stroke="#555b66" stroke-width="1"/></svg>
      <svg class="n-tri t4"><use href="#caret"/></svg>
      <svg class="n-win" viewBox="0 0 30 26"><rect x=".8" y=".8" width="28.400" height="24.400" fill="url(#glass)" stroke="#234a86" stroke-width="1.600"/><path d="M15 1v24M1 13h28" stroke="#234a86" stroke-width="2"/><path d="M3.500 3.500h8.500v7H3.500zM18 3.500h8.500v7H18zM3.500 15.500h8.500v7H3.500zM18 15.500h8.500v7H18z" fill="none" stroke="#5d86bd"/></svg>
      <svg class="n-tri t5"><use href="#caret"/></svg>
    </div>
  </main>
</div>
<script src="grid.js"></script>
</body>
</html>
```
FILE: styles.css
```css
* { box-sizing: border-box; }
body { margin: 0; width: 2546px; height: 1446px; overflow: hidden; background: #191c3c; font: 22px "Open Sans", "Noto Sans", sans-serif; color: #3c3c3c; display: flex; flex-direction: column; }
svg { display: block; flex: none; overflow: visible; }
.defs { position: absolute; width: 0; height: 0; }

.menubar { flex: none; height: 49px; display: flex; align-items: flex-start; background: linear-gradient(90deg, #1e2b59, #253460 30%, #3b4877 72%, #3c4979); box-shadow: inset 0 -2px #1d2447aa; color: #ebebf0; font: 25px/30px Inter, sans-serif; }
.apple { width: 25px; height: 32px; margin: 6px 0 0 44px; }
.menus { display: grid; grid-template-columns: 186px 84.5px 87px 100.500px 137.500px 60px; margin: 9px 0 0 46px; white-space: nowrap; }
.menus b { font-weight: 700; letter-spacing: .75px; }
.status { margin-left: auto; height: 49px; display: flex; align-items: flex-start; }
.s-pods { width: 24px; height: 31px; margin-top: 9px; }
.s-play { width: 26px; height: 26px; margin: 12px 0 0 42px; }
.s-moon { width: 26px; height: 26px; margin: 12px 0 0 38px; }
.s-find { width: 25px; height: 25px; margin: 12px 0 0 38px; }
.s-flag { width: 32px; height: 22px; margin: 13px 0 0 41px; }
.s-lang { width: 42px; margin: 9px 0 0 10px; font-size: 22.500px; letter-spacing: -.2px; }
.s-bt { width: 18px; height: 27px; margin: 8px 0 0 45px; }
.s-batt { width: 51px; height: 24px; margin: 12px 0 0 40px; }
.s-cc { width: 26px; height: 26px; margin: 12px 0 0 35px; overflow: hidden; }

.window { flex: 1; margin-top: 1px; border-top: 1px solid #b4b4b4; border-radius: 18px 0 0 0; overflow: hidden; background: #f1f1f1; display: flex; flex-direction: column; }
.titlebar { flex: none; height: 58px; background: #f0f0f0; border-bottom: 2px solid #a6a6a6; border-top: 1px solid #fff; display: grid; grid-template-columns: 163px 1fr; }
.lights { display: flex; gap: 16px; padding: 16px 0 0 16px; }
.lights i { width: 24px; height: 24px; border-radius: 50%; background: #8b8b8b; border: 1px solid #767676; }
h1 { margin: 12px 0 0; padding-left: 999px; font: 700 25px/30px Inter, sans-serif; letter-spacing: .75px; color: #464646; white-space: nowrap; }

.tabbar { flex: none; height: 63px; background: #cbcbcb; display: flex; }
.quick { width: 386px; display: flex; color: #666; align-items: flex-start; }
.q-grid { width: 28px; height: 28px; margin: 17px 0 0 18px; }
.q-file { width: 26px; height: 32px; margin: 15px 0 0 39px; }
.q-c1, .q-c2, .q-c3 { width: 15px; height: 11px; margin-top: 24px; }
.q-c1 { margin-left: 11px; }
.q-save { width: 28px; height: 28px; margin: 17px 0 0 37px; }
.q-undo, .q-redo { width: 26px; height: 24px; margin-top: 20px; }
.q-undo { margin-left: 39px; }
.q-c2 { margin-left: 13px; }
.q-redo { margin-left: 24px; }
.q-c3 { margin-left: 13px; color: #8f8f8f; }
.doc-tab { width: 2052px; margin-top: 7px; background: #f1f1f1; border-radius: 8px 8px 0 0; display: flex; padding-left: 890px; }
.cube { width: 32px; height: 31px; margin-top: 13px; }
.doc-tab span { margin: 10px 0 0 10px; font-size: 23.500px; line-height: 34px; letter-spacing: .8px; white-space: nowrap; }
.close { width: 18px; height: 18px; margin: 19px 13px 0 auto; }
.new-tab { width: 56px; margin: 7px 0 0 8px; background: #b9b9b9; border-radius: 8px 8px 0 0; padding: 15px 0 0 17px; }
.new-tab svg { width: 25px; height: 25px; }
.job { width: 20px; height: 32px; margin: 15px 0 0 24px; }

.ribbon { flex: none; height: 164px; border-bottom: 2px solid #c8c8c8; display: grid; grid-template-columns: 252px 1fr; background: #f1f1f1; letter-spacing: .3px; }
.workspace { width: 220px; height: 122px; margin: 21px 0 0 23px; border: 2px solid #ccc; border-radius: 8px; background: none; color: #333; font: 700 22px "Open Sans", sans-serif; display: flex; align-items: center; justify-content: center; gap: 9px; padding: 0 0 3px 2px; }
.workspace svg { width: 13px; height: 9px; }
.tabs { display: grid; grid-template-columns: 156px 186.500px 145px 236px 176px auto; justify-items: start; padding-left: 25px; height: 48px; }
.tabs span { height: 47px; padding: 6px 0 0 23.500px; line-height: 30px; white-space: nowrap; }
.tabs .on { width: 116px; font-weight: 700; color: #0696d7; border-bottom: 6px solid #0696d7; }
.groups { display: flex; margin-top: 5px; }
.group { height: 102px; border-right: 2px solid #c9c9c9; }
.group:last-child { border: 0; }
.icons { display: flex; gap: 22px; height: 65px; padding-top: 1px; }
.icons svg { width: 64px; height: 64px; }
.icons .wide { width: 66px; }
.icons .big { width: 76px; height: 76px; margin-top: -6px; }
.label { display: flex; align-items: center; gap: 6px; height: 30px; margin-top: 9px; white-space: nowrap; }
.label svg { width: 12px; height: 8px; margin-top: -2px; color: #333; }
.create { width: 537px; padding-left: 22px; } .create .label { padding-left: 191.500px; letter-spacing: .4px; }
.modify { width: 538px; padding-left: 23px; } .modify .label { padding-left: 191px; }
.assemble { width: 194px; padding-left: 23px; } .assemble .label { padding-left: 10.500px; letter-spacing: -.2px; }
.construct { width: 208px; padding-left: 28px; } .construct .icons { padding-left: 45px; } .construct .label { letter-spacing: .6px; }
.inspect { width: 158px; padding-left: 28px; } .inspect .icons { padding-left: 21px; }
.insert { width: 148px; padding-left: 27.500px; } .insert .icons { padding-left: 15.500px; }
.select { padding-left: 28px; } .select .icons { padding-left: 9px; } .select .label { letter-spacing: .5px; }

.viewport { flex: 1; position: relative; background: #fefefe; overflow: hidden; }
.scene { position: absolute; inset: 0; width: 2546px; height: 1110px; }
.browser, .comments { position: absolute; left: 8px; width: 599px; display: flex; align-items: center; background: #f1f1f1; border: 1px solid #c8c8c8; border-right-width: 2px; color: #666; }
.browser { top: 8px; height: 50px; border-width: 1px 2px 3px 1px; }
.collapse { width: 20px; height: 12px; margin-left: 8px; }
.browser span { margin: -3px auto 0 21px; letter-spacing: -.2px; }
.dot { width: 16px; height: 16px; margin-right: 16px; }
.grip { width: 6px; height: 22px; border: solid #8e8e8e; border-width: 0 1.500px 0 2px; }
.comments { top: 1070px; height: 60px; border-top: 0; padding-bottom: 11px; }
.comments span { margin: -2px auto 0 49.500px; letter-spacing: .1px; }
.comments .dot { width: 18px; height: 18px; margin-right: 15px; }

.tree { position: absolute; left: 0; top: 68px; margin: 0; padding: 0; list-style: none; display: flex; flex-direction: column; gap: 8px; letter-spacing: .35px; }
.tree li { height: 40px; display: flex; align-items: center; }
.tw { width: 12px; height: 18px; }
.tw.o { width: 14px; height: 14px; }
.root { padding-left: 47px; }
.l1 { padding-left: 84px; }
.l2 { padding-left: 154px; }
.node { height: 40px; display: flex; align-items: center; padding-left: 6px; background: #f1f1f1; white-space: nowrap; }
.node > span { margin: -2px 0 0 28px; }
.root .node { margin-left: 21px; width: 368px; }
.l1 .node { margin-left: 22px; }
.l1 .tw.o { margin-left: -1px; }
.l1 .tw.o + .node { margin-left: 21px; }
.hl { width: 268px; height: 32px; margin-left: 12px; background: #999; display: flex; align-items: center; color: #fff; }
.hl b { margin: -2px 0 0 31px; letter-spacing: .5px; }
.comp { width: 26px; height: 27px; margin: -3px 0 0 9px; }
.radio { width: 27px; height: 27px; margin: -2px 0 0 9px; }
.eye { width: 32px; height: 24px; }
.eye + svg { margin-left: 18px; }
.ic, .skic { width: 32px; height: 32px; }
.folder { width: 32px; height: 26px; }
.can { width: 32px; height: 30px; margin-top: -2px; }
.w-doc { width: 284px; } .w-views { width: 228px; } .w-origin { width: 198px; } .w-bodies { width: 206px; } .w-sketches { width: 230px; }
.body { width: 198px; } .sk { width: 222px; }
.body span { letter-spacing: .1px; }

.navbar { position: absolute; left: 1194px; top: 1072px; width: 474px; height: 40px; background: #f1f1f1; display: flex; align-items: flex-start; color: #333; }
.navbar svg { margin-top: 8px; height: 30px; }
.navbar .n-tri { width: 12px; height: 9px; margin-top: 19.500px; }
.navbar .n-orbit { width: 30px; margin-left: 8px; }
.navbar .t1 { margin-left: 10px; }
.navbar .n-look { width: 28px; height: 28px; margin: 9px 0 0 14px; }
.navbar .n-hand { width: 30px; margin-left: 23px; }
.navbar .n-zoom { width: 31px; margin-left: 21px; }
.navbar .n-fit { width: 31px; margin-left: 21.500px; }
.navbar .t2 { margin-left: 10px; }
.navbar .n-disp { width: 30px; margin-left: 13px; }
.navbar .t3 { margin-left: 5px; }
.navbar .n-grid { width: 30px; margin-left: 15px; }
.navbar .t4 { margin-left: 5px; }
.navbar .n-win { width: 30px; height: 26px; margin: 11px 0 0 15px; }
.navbar .t5 { margin-left: 5px; }
```
FILE: grid.js
```js
// Isometric ground grid: both line families cross at the model origin.
const origin = { x: 795.6, y: 683.5 };
const slope = 0.5774;
const step = 69.36;
const width = 2546;
const lines = { minor: '', major: '' };

for (let k = -40; k <= 40; k++) {
  if (k === 0) continue;
  const kind = k % 5 === 0 ? 'major' : 'minor';
  for (const s of [slope, -slope]) {
    const y0 = origin.y + k * step - s * origin.x;
    const y1 = y0 + s * width;
    lines[kind] += `M0 ${y0.toFixed(1)}L${width} ${y1.toFixed(1)}`;
  }
}

for (const kind in lines) {
  document.getElementById(kind).setAttribute('d', lines[kind]);
}
```
